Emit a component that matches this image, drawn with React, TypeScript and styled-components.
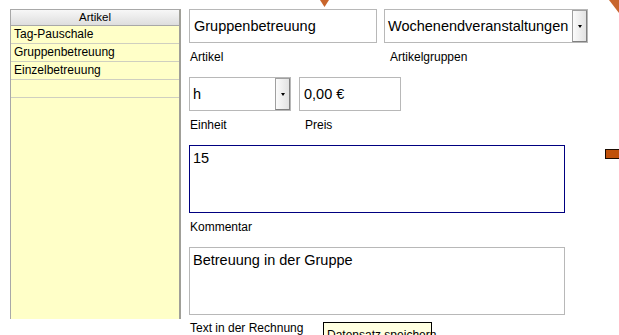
import styled, { createGlobalStyle } from "styled-components";

const GlobalStyle = createGlobalStyle`
    html, body {
        margin: 0;
        padding: 0;
        background: #ffffff;
        font-family: "Liberation Sans", Arial, sans-serif;
        color: #000000;
    }
`;

const Page = styled.div`
    position: relative;
    height: 335px;
    overflow: hidden;
    display: flex;
    align-items: flex-start;
    padding: 9px 0 0 10px;
    box-sizing: border-box;
`;

const ListPanel = styled.div`
    width: 168px;
    height: 309px;
    background: #ffffc8;
    border-top: 1px solid #a8a8a8;
    border-left: 1px solid #a8a8a8;
    border-right: 2px solid #a09f98;
    flex-shrink: 0;
`;

const ListHeader = styled.div`
    height: 15px;
    line-height: 15px;
    text-align: center;
    font-size: 11.5px;
    background: linear-gradient(#f7f7f7, #dedede);
    border-bottom: 1px solid #a8a8a8;
`;

const ListRow = styled.div`
    height: 17px;
    line-height: 17px;
    padding-left: 3px;
    font-size: 12px;
    border-bottom: 1px solid #cfcfc0;
    white-space: nowrap;
`;

const Form = styled.div`
    display: flex;
    flex-direction: column;
    margin-left: 8px;
`;

const Row = styled.div<{ $gap: number; $top?: number }>`
    display: flex;
    gap: ${(p) => p.$gap}px;
    margin-top: ${(p) => p.$top ?? 0}px;
`;

const Field = styled.div<{ $top?: number }>`
    display: flex;
    flex-direction: column;
    margin-top: ${(p) => p.$top ?? 0}px;
`;

const Label = styled.div<{ $indent?: number; $top?: number }>`
    font-size: 12px;
    height: 14px;
    line-height: 14px;
    margin-top: ${(p) => p.$top ?? 7}px;
    padding-left: ${(p) => p.$indent ?? 1}px;
    white-space: nowrap;
`;

const TextBox = styled.div<{ $width: number }>`
    width: ${(p) => p.$width}px;
    height: 34px;
    box-sizing: border-box;
    border: 1px solid #b8b8b8;
    background: #ffffff;
    font-size: 14.5px;
    line-height: 32px;
    padding-left: 4px;
    white-space: nowrap;
    overflow: hidden;
`;

const Combo = styled.div<{ $width: number }>`
    width: ${(p) => p.$width}px;
    height: 34px;
    box-sizing: border-box;
    border: 1px solid #b8b8b8;
    background: #ffffff;
    display: flex;
    font-size: 14.5px;
`;

const ComboText = styled.div`
    flex: 1;
    line-height: 32px;
    padding-left: 3px;
    white-space: nowrap;
    overflow: hidden;
`;

const DropButton = styled.div`
    width: 15px;
    box-sizing: border-box;
    border: 1px solid #a0a0a0;
    border-right-color: #808080;
    border-bottom-color: #808080;
    background: linear-gradient(90deg, #fbfbfb, #e2e2e2);
    display: flex;
    align-items: center;
    justify-content: center;

    &::after {
        content: "";
        border-left: 2.5px solid transparent;
        border-right: 2.5px solid transparent;
        border-top: 3px solid #000000;
    }
`;

const Memo = styled.div<{ $focused?: boolean }>`
    width: 376px;
    height: 68px;
    box-sizing: border-box;
    border: 1px solid ${(p) => (p.$focused ? "#000080" : "#b8b8b8")};
    background: #ffffff;
    font-size: 14.5px;
    line-height: 17px;
    padding: 4px 3px;
`;

const Tooltip = styled.div`
    position: absolute;
    left: 323px;
    top: 322px;
    width: 109px;
    height: 20px;
    border: 1px solid #000000;
    background: #ffffe1;
    font-size: 12px;
    line-height: 14px;
    padding: 5px 0 0 3px;
    box-sizing: border-box;
    white-space: nowrap;
`;

const Marker = styled.svg<{ $left: number; $top: number }>`
    position: absolute;
    left: ${(p) => p.$left}px;
    top: ${(p) => p.$top}px;
`;

const articles = ["Tag-Pauschale", "Gruppenbetreuung", "Einzelbetreuung", ""];

function App() {
    return (
        <Page>
            <GlobalStyle />
            <ListPanel>
                <ListHeader>Artikel</ListHeader>
                {articles.map((a, i) => (
                    <ListRow key={i}>{a}</ListRow>
                ))}
            </ListPanel>
            <Form>
                <Row $gap={7}>
                    <Field>
                        <TextBox $width={188}>Gruppenbetreuung</TextBox>
                        <Label>Artikel</Label>
                    </Field>
                    <Field>
                        <Combo $width={204}>
                            <ComboText>Wochenendveranstaltungen</ComboText>
                            <DropButton />
                        </Combo>
                        <Label $indent={6}>Artikelgruppen</Label>
                    </Field>
                </Row>
                <Row $gap={8} $top={13}>
                    <Field>
                        <Combo $width={102}>
                            <ComboText>h</ComboText>
                            <DropButton />
                        </Combo>
                        <Label>Einheit</Label>
                    </Field>
                    <Field>
                        <TextBox $width={102}>0,00 €</TextBox>
                        <Label $indent={6}>Preis</Label>
                    </Field>
                </Row>
                <Field $top={13}>
                    <Memo $focused>15</Memo>
                    <Label>Kommentar</Label>
                </Field>
                <Field $top={13}>
                    <Memo>Betreuung in der Gruppe</Memo>
                    <Label $top={6}>Text in der Rechnung</Label>
                </Field>
            </Form>
            <Marker $left={320} $top={0} width="9" height="8" viewBox="0 0 9 8">
                <polygon points="0,0 9,0 4.5,7" fill="#c8652c" />
            </Marker>
            <Marker $left={606} $top={0} width="13" height="14" viewBox="0 0 13 14">
                <polygon points="3,0 13,0 13,13" fill="#c8652c" />
            </Marker>
            <Marker $left={605} $top={149} width="14" height="10" viewBox="0 0 14 10">
                <rect x="0.5" y="0.5" width="15" height="9" fill="#c0500a" stroke="#1a0a00" />
            </Marker>
            <Tooltip>Datensatz speichern</Tooltip>
        </Page>
    );
}

export default App;
